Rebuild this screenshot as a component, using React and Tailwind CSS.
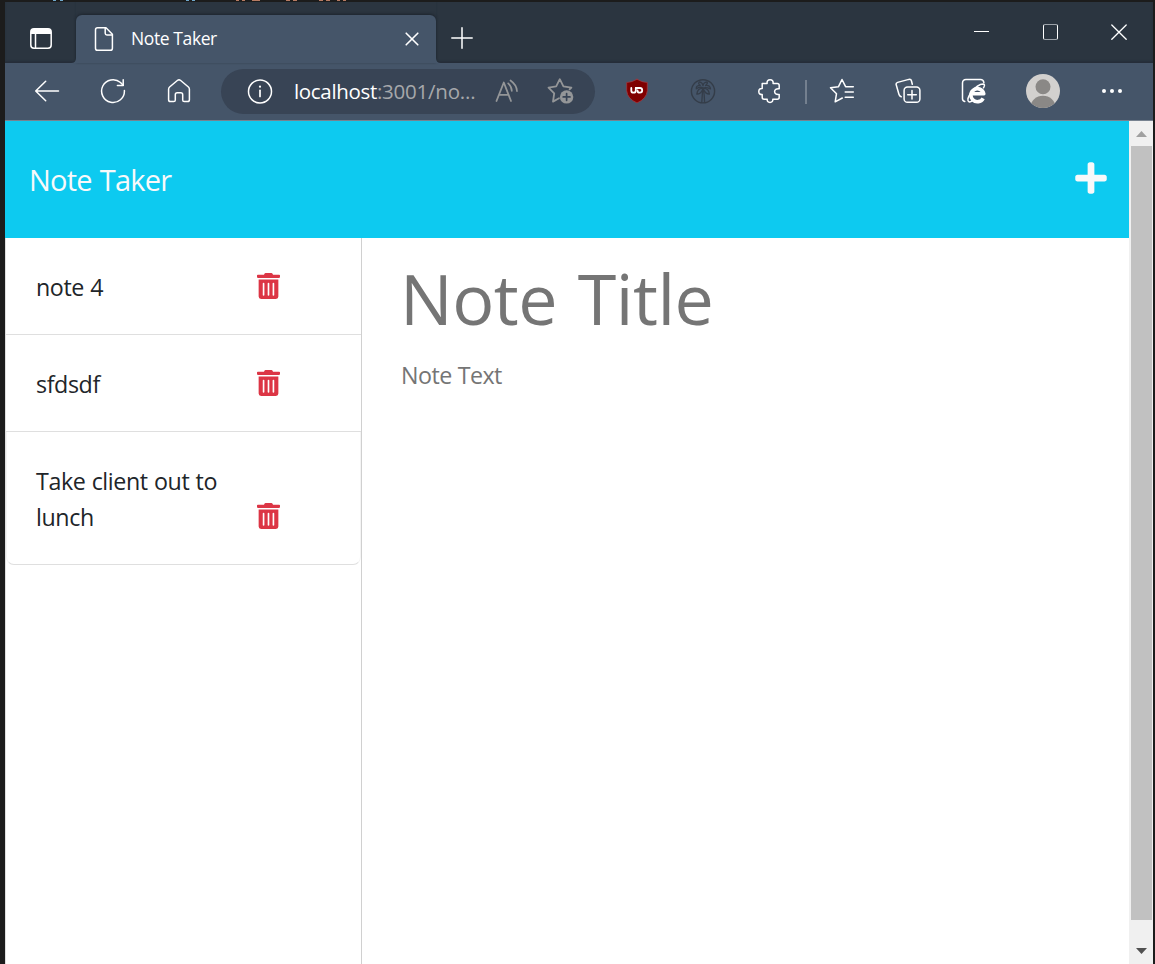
import React from "react";
import { FaPlus, FaTrashAlt } from "react-icons/fa";

const NOTES = ["note 4", "sfdsdf", "Take client out to lunch"];

function Icon({ w = 26, h = 26, sw = 1.5, className = "", children }) {
  return (
    <svg
      width={w}
      height={h}
      viewBox={`0 0 ${w} ${h}`}
      fill="none"
      stroke="currentColor"
      strokeWidth={sw}
      strokeLinecap="round"
      strokeLinejoin="round"
      className={"shrink-0 " + className}
    >
      {children}
    </svg>
  );
}

function ToolButton({ children }) {
  return <div className="flex h-[45px] w-[66px] shrink-0 items-center justify-center pb-[2px]">{children}</div>;
}

function TitleBar() {
  return (
    <div className="flex h-[61px] bg-[#2b3540]">
      <div className="flex w-[71px] items-end shadow-[inset_0_-2px_2px_#252e39]">
        <Icon w={22} h={21} className="mb-[14px] ml-[25px] text-white">
          <rect x="0.8" y="0.8" width="20.4" height="19.4" rx="3.2" />
          <path d="M1 3.5 Q1 1 3.5 1 H18.5 Q21 1 21 3.5 V6 H1Z" fill="currentColor" stroke="none" />
          <path d="M5.5 6V20" />
        </Icon>
      </div>
      <div className="relative mt-[13px] flex h-[48px] w-[360px] items-center rounded-t-[6px] bg-[#455569] shadow-[0_-1px_3px_#1d242d]">
        <svg width="5" height="5" className="absolute bottom-0 -left-[5px]">
          <path d="M5 0Q5 5 0 5H5Z" fill="#455569" />
        </svg>
        <svg width="5" height="5" className="absolute -right-[5px] bottom-0">
          <path d="M0 0Q0 5 5 5H0Z" fill="#455569" />
        </svg>
        <Icon w={20} h={26} className="ml-[18px] text-white">
          <path d="M3.6 1.8H12L18.4 8.2V22.2Q18.4 24.3 16.3 24.3H3.6Q1.5 24.3 1.5 22.2V3.9Q1.5 1.8 3.6 1.8Z" />
          <path d="M11.2 2V7.3Q11.2 9 12.9 9H18.2" />
        </Icon>
        <span className="mb-[2px] ml-[17px] w-[274px] whitespace-nowrap text-[17.5px] leading-6 tracking-[-0.4px] text-white">
          Note Taker
        </span>
        <Icon w={14} h={14} sw={1.6} className="text-white">
          <path d="M1.2 1.2 12.8 12.8M12.8 1.2 1.2 12.8" />
        </Icon>
      </div>
      <div className="flex grow shadow-[inset_0_-2px_2px_#252e39]">
        <Icon w={22} h={22} sw={1.5} className="ml-[15px] mt-[25px] text-white">
          <path d="M0.8 11H21.2M11 0.8V21.2" />
        </Icon>
        <div className="ml-auto mr-[-1px] flex h-[61px] text-white">
          <div className="flex w-[69px] justify-center pt-[29px]">
            <div className="h-px w-[15px] bg-white" />
          </div>
          <div className="flex w-[69px] justify-center pt-[22px]">
            <div className="h-4 w-[15px] rounded-[2px] border border-white border-y-[#9ba1a8]" />
          </div>
          <div className="flex w-[69px] justify-center pr-px pt-[22px]">
            <Icon w={16} h={16} sw={1.3}>
              <path d="M0.8 1 15.2 15.2M15.2 1 0.8 15.2" />
            </Icon>
          </div>
        </div>
      </div>
    </div>
  );
}

function AddressBar() {
  return (
    <div className="ml-[9px] mr-[9px] flex h-[45px] w-[374px] shrink-0 items-center rounded-full bg-[#384455] pb-[2px]">
      <Icon className="ml-[26px] text-white">
        <circle cx="13" cy="13.5" r="11.5" />
        <path d="M13 12.3V18.5" strokeWidth="1.7" />
        <circle cx="13" cy="8.7" r="1.1" fill="currentColor" stroke="none" />
      </Icon>
      <span className="ml-[21px] w-[201px] whitespace-nowrap text-[20.5px] leading-8 text-[#a6a8ab]">
        <span className="tracking-[-0.33px] text-white">localhost</span>
        <span className="tracking-[-0.22px]">:3001/no...</span>
      </span>
      <Icon w={24} h={24} className="text-[#949698]">
        <path d="M1.5 22 8.8 3.5 16 22M4.2 15.8H13.4" strokeWidth="1.8" />
        <path d="M13.2 4.4Q16.6 7.4 16.8 12M15.5 1.5Q21.8 6 22 12.2" strokeWidth="1.7" />
      </Icon>
      <Icon w={28} h={27} className="ml-[28px] text-[#949698]">
        <path
          d="M12 21.2 6 24.6 7.2 16.4 1.5 10.6 9.2 9.4 12.8 2.2 16.4 9.4 24.4 10.6 22.6 12.4"
          strokeWidth="1.8"
        />
        <circle cx="19.6" cy="19.9" r="6.7" fill="currentColor" stroke="none" />
        <path d="M19.6 16.5V23.3M16.2 19.9H23" stroke="#384455" strokeWidth="1.7" />
      </Icon>
    </div>
  );
}

function Toolbar() {
  return (
    <div className="flex h-[58px] items-center border-b border-[#778290] bg-[#455569] pl-[9px] text-white">
      <ToolButton>
        <Icon>
          <path d="M11.7 3.2 1.7 13 11.7 22.8M1.7 13H24.5" />
        </Icon>
      </ToolButton>
      <ToolButton>
        <Icon>
          <path d="M24.4 12.5A11.4 11.4 0 1 1 20.5 4.5L23.2 7.3" />
          <path d="M23.2 1.7V7.4H17.4" />
        </Icon>
      </ToolButton>
      <ToolButton>
        <Icon>
          <path d="M11.6 2.3Q13 1.2 14.4 2.3L22.4 9Q23.4 9.9 23.4 11.2V21.7Q23.4 23.6 21.5 23.6H18.3Q16.7 23.6 16.7 22V16.7Q16.7 14.8 14.8 14.8H11.2Q9.3 14.8 9.3 16.7V22Q9.3 23.6 7.7 23.6H4.5Q2.6 23.6 2.6 21.7V11.2Q2.6 9.9 3.6 9Z" />
        </Icon>
      </ToolButton>
      <AddressBar />
      <ToolButton>
        <Icon w={22} h={26}>
          <path
            d="M11 1.3Q15.5 4.3 21.3 4.5V12.8Q20.5 20.8 11 24.9 1.5 20.8 0.7 12.8V4.5Q6.5 4.3 11 1.3Z"
            fill="#800000"
            stroke="#ab3a40"
            strokeWidth="0.7"
          />
          <path d="M5.3 10V12.4Q5.3 14.7 7.5 14.7 9.8 14.7 9.8 12.4V10" strokeWidth="1.8" />
          <path d="M9.8 10H13.8A2.35 2.35 0 1 1 11.5 12.4" strokeWidth="1.8" />
        </Icon>
      </ToolButton>
      <ToolButton>
        <Icon className="text-[#343d49]" sw={1.3}>
          <circle cx="13" cy="13.3" r="11.6" strokeWidth="1.4" />
          <path d="M11.8 24.4Q12.3 17 12.6 11.5M14.6 24.4Q14.4 17 13.5 11.5" />
          <path d="M13 10Q10 8.2 6.3 10.8 5.8 7.4 10.2 7.4 7.6 5.6 9.4 3.9 12.6 4.5 13 7.7 13.4 4.5 17 3.9 18.1 5.6 15.6 7.5 20 7 20.5 10.8 16 8.8 13 10Z" />
          <path d="M12.6 10.4Q7.7 10 6.8 16.2 10.8 15.8 12.8 11.4M13.4 10.4Q18.6 10 19.4 16.2 15.4 15.8 13.3 11.4" />
        </Icon>
      </ToolButton>
      <ToolButton>
        <Icon className="translate-x-px">
          <path d="M5.2 5.5H10.1Q9.7 1.8 13.1 1.8T16.1 5.5H20.2Q22.2 5.5 22.2 7.5V10.8Q17.6 10.4 17.6 13.6T22.2 16.4V19.2Q22.2 21.2 20.2 21.2H15.8Q16.1 24.4 13 24.4T10.2 21.2H7.2Q5.2 21.2 5.2 19.2V16.6Q1.8 16.8 1.8 13.5T5.2 10.4Z" />
        </Icon>
      </ToolButton>
      <div className="ml-[3px] mr-[2px] h-6 w-[2px] shrink-0 bg-[#74808f]" />
      <ToolButton>
        <Icon>
          <path d="M13.3 20 6.2 23.8 7.5 15.7 1.5 9.8 9.5 8.7 13 1.5 16.6 8.7H24.3M16.2 13.9H24.3M16.2 19.2H24.3" />
        </Icon>
      </ToolButton>
      <ToolButton>
        <Icon>
          <path d="M6.2 18.8Q4.5 18.2 4 16.5L1.2 6.8Q.7 5 2.6 4.4L13.8 1.4Q16 .9 16.5 3L17.3 6.2" />
          <rect x="9.1" y="9" width="15.8" height="15.3" rx="3.4" />
          <path d="M17 12.4V21M12.7 16.7H21.3" />
        </Icon>
      </ToolButton>
      <ToolButton>
        <Icon>
          <path d="M3.8 23.4Q1.5 22.8 1.5 20.7V5Q1.5 1.6 5 1.6H19.5Q22.4 1.6 22.9 4.7" />
          <path d="M22.1 20.3A6.5 6.5 0 1 1 22.7 15.7H11" strokeWidth="3.6" strokeLinecap="butt" />
          <path d="M22.5 9.8Q24.6 6.2 22.2 6.1 16.7 6.2 9.7 14.8 5 22.2 8 23.8 10 24.4 12.6 21.6" />
        </Icon>
      </ToolButton>
      <div className="mb-[2px] ml-[19px] flex h-[34px] w-[34px] shrink-0 overflow-hidden rounded-full bg-[#d2d0ce]">
        <svg width="34" height="34" viewBox="0 0 34 34">
          <circle cx="17" cy="12.7" r="7.5" fill="#8a8886" />
          <ellipse cx="17" cy="33" rx="12.3" ry="11.2" fill="#8a8886" />
        </svg>
      </div>
      <Icon w={22} h={6} className="mb-[2px] ml-[41px]">
        <g fill="currentColor" stroke="none">
          <circle cx="3" cy="3" r="2" />
          <circle cx="11" cy="3" r="2" />
          <circle cx="19" cy="3" r="2" />
        </g>
      </Icon>
    </div>
  );
}

function NoteItem({ text, last }) {
  return (
    <li
      className={
        "flex items-end border-b border-[#dfdfdf] pb-[29px] pt-[31px] " +
        (last ? "rounded-b-[8px] border-x border-x-[#f4f4f4] pl-[29px]" : "pl-[30px]")
      }
    >
      <span className="w-[221px] pr-6 text-[23.25px] leading-9 tracking-[-0.4px] text-[#212529] [word-spacing:0.6px]">
        {text}
      </span>
      <FaTrashAlt className="mb-[6px] h-[26px] w-[23px] text-[#dc3545]" preserveAspectRatio="none" />
    </li>
  );
}

function Scrollbar() {
  return (
    <div className="flex w-6 shrink-0 flex-col items-center bg-[#f0f0f0]">
      <div className="flex h-[25px] items-center">
        <svg width="11" height="6" viewBox="0 0 11 6" className="mt-px">
          <path d="M0 6 5.5 0 11 6Z" fill="#a0a0a0" />
        </svg>
      </div>
      <div className="h-[774px] w-[21px] bg-[#c1c1c1]" />
      <svg width="11" height="6" viewBox="0 0 11 6" className="mt-[28px]">
        <path d="M0 0 5.5 6 11 0Z" fill="#505050" />
      </svg>
    </div>
  );
}

export default function App() {
  return (
    <div className="flex h-[964px] w-[1155px] flex-col overflow-hidden bg-[#1c1c1c] pl-[5px] pr-[2px] font-['Open_Sans','Noto_Sans',sans-serif]">
      <div className="flex h-[2px] shrink-0 items-start">
        <div className="ml-[48px] h-px w-[10px] border-x-[3px] border-[#6fa8cc]" />
        <div className="ml-[123px] h-px w-[9px] border-x-[3px] border-[#6fa8cc]" />
        <div className="ml-[41px] h-px w-[9px] border-x-[3px] border-[#b77b63]" />
        <div className="ml-[7px] h-px w-[8px] bg-[#b77b63]" />
        <div className="ml-[26px] h-px w-[11px] border-x-[4px] border-[#b77b63]" />
        <div className="ml-[22px] h-px w-[11px] border-x-[4px] border-[#b77b63]" />
        <div className="ml-[7px] h-px w-[9px] border-x-[3px] border-[#b77b63]" />
      </div>
      <TitleBar />
      <Toolbar />
      <div className="flex h-[843px] bg-white">
        <div className="flex grow flex-col">
          <header className="flex h-[117px] shrink-0 items-center justify-between bg-[#0dcaf0] pl-[24px] pr-[22px] text-[#f8f9fa]">
            <h1 className="text-[29px] leading-[44px] tracking-[-0.75px] [word-spacing:1px]">Note Taker</h1>
            <FaPlus className="mb-[4px] h-[36px] w-[32px]" />
          </header>
          <main className="flex grow">
            <aside className="w-[357px] shrink-0 border-x border-l-[#dfdfdf] border-r-[#d0d0d0]">
              <ul>
                {NOTES.map((text, i) => (
                  <NoteItem key={text} text={text} last={i === NOTES.length - 1} />
                ))}
              </ul>
            </aside>
            <section className="pl-[39px] pt-[18px] text-[#757575]">
              <h2 className="-ml-px whitespace-nowrap text-[70px] leading-[84px] tracking-[-0.5px] [word-spacing:3px]">
                Note Title
              </h2>
              <p className="pt-[17px] text-[23.25px] leading-9 tracking-[-0.55px] [word-spacing:0.6px]">Note Text</p>
            </section>
          </main>
        </div>
        <Scrollbar />
      </div>
    </div>
  );
}
